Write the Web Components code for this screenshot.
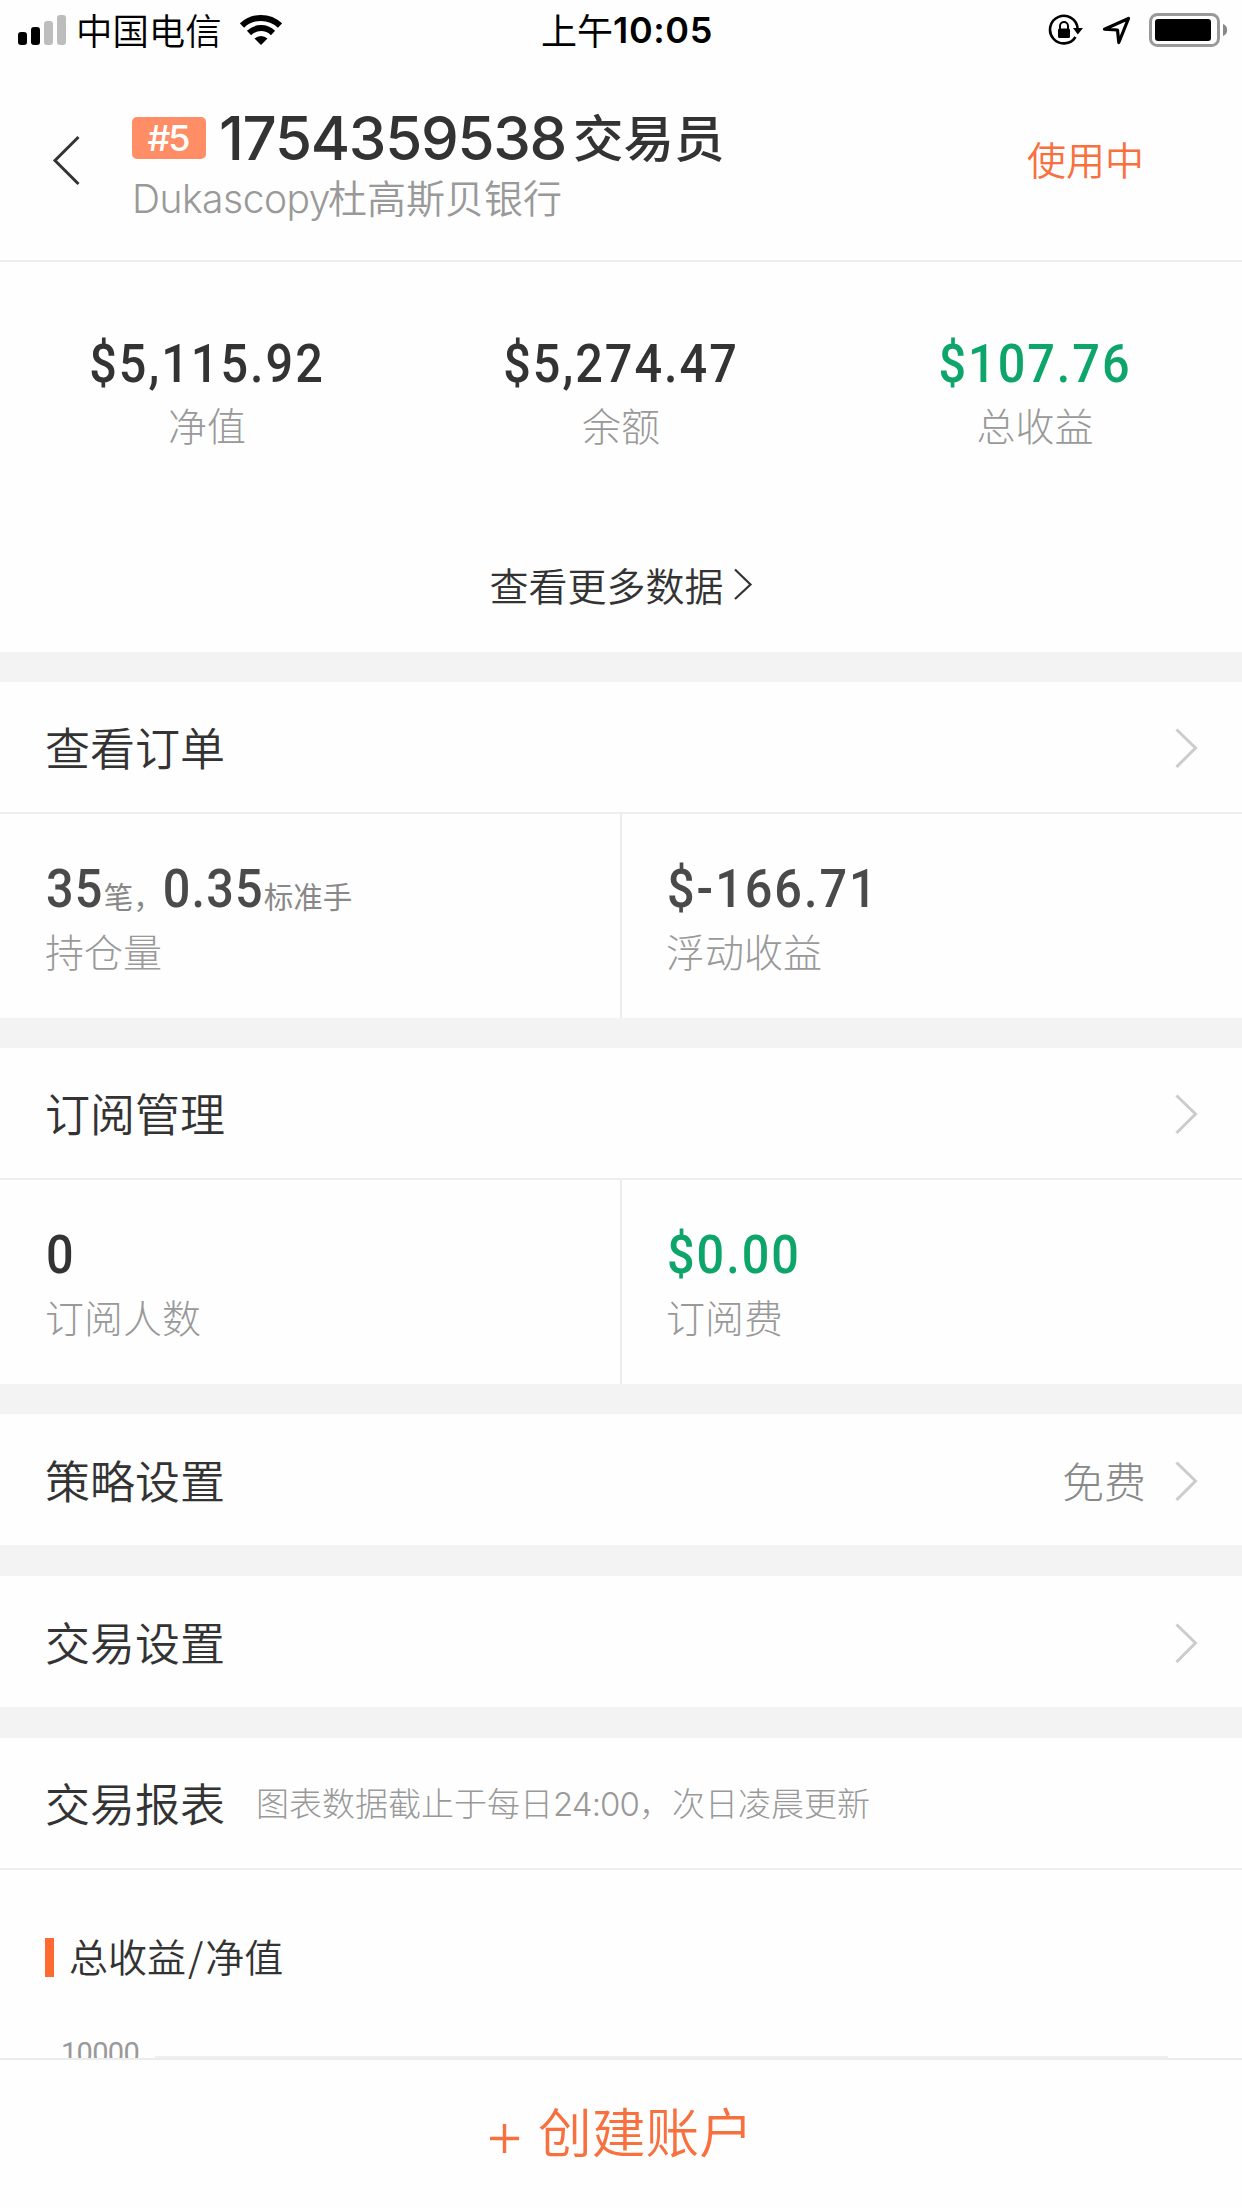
<!DOCTYPE html>
<html lang="zh-CN">
<head>
<meta charset="utf-8">
<title>交易员账户</title>
<style>
  html, body { margin: 0; padding: 0; background: #fefefe; }
  body {
    width: 1242px; height: 2208px; overflow: hidden;
    display: flex; flex-direction: column;
    font-family: "Noto Sans CJK SC", sans-serif; color: #333;
  }
</style>
</head>
<body>
<status-bar carrier="中国电信"><span slot="period">上午</span><span slot="time">10:05</span></status-bar>
<account-header>
  <span slot="rank">#5</span>
  <span slot="id">1754359538</span>
  <span slot="role">交易员</span>
  <span slot="latin">Dukascopy</span>
  <span slot="broker">杜高斯贝银行</span>
  <span slot="state">使用中</span>
</account-header>
<stats-panel>
  <stat-item><span slot="value">$5,115.92</span>净值</stat-item>
  <stat-item><span slot="value">$5,274.47</span>余额</stat-item>
  <stat-item style="--value:#0ea56b"><span slot="value">$107.76</span>总收益</stat-item>
  <span slot="more">查看更多数据</span>
</stats-panel>
<band-gap></band-gap>
<list-row lined arrow>查看订单</list-row>
<metric-pair>
  <metric-cell style="--value:#4a4a4a;--track:1.2px"><span slot="value">35</span><span slot="unit">笔，</span><span slot="value2">0.35</span><span slot="unit2">标准手</span>持仓量</metric-cell>
  <metric-cell style="--value:#4a4a4a"><span slot="value">$-166.71</span>浮动收益</metric-cell>
</metric-pair>
<band-gap></band-gap>
<list-row lined arrow>订阅管理</list-row>
<metric-pair>
  <metric-cell><span slot="value">0</span>订阅人数</metric-cell>
  <metric-cell style="--value:#0ea56b"><span slot="value">$0.00</span>订阅费</metric-cell>
</metric-pair>
<band-gap></band-gap>
<list-row arrow style="height:131px">策略设置<span slot="note">免费</span></list-row>
<band-gap style="height:31px"></band-gap>
<list-row arrow style="height:131px">交易设置</list-row>
<band-gap style="height:31px"></band-gap>
<list-row lined>交易报表<span slot="hint">图表数据截止于每日<span style="font-family:Inter,sans-serif;letter-spacing:-0.9px">24:00</span>，次日凌晨更新</span></list-row>
<chart-panel>总收益<span style="letter-spacing:2px;margin-left:2px">/</span>净值<span slot="tick">10000</span></chart-panel>
<create-action>创建账户</create-action>

<script>
const define = (name, html) => customElements.define(name, class extends HTMLElement {
  constructor() {
    super();
    const t = document.createElement('template');
    t.innerHTML = html;
    this.attachShadow({ mode: 'open' }).appendChild(t.content.cloneNode(true));
    this.ready();
  }
  ready() {
    const c = this.shadowRoot.querySelector('[data-carrier]');
    if (c) c.textContent = this.getAttribute('carrier');
  }
});

define('status-bar', `
<style>
  :host { display: grid; grid-template-columns: 1fr auto 1fr; align-items: center; height: 60px; flex: none; color: #000; font-size: 36px; line-height: 60px; }
  .left { display: flex; align-items: center; padding-left: 18px; }
  .carrier { margin: -2px 0 0 10px; font-size: 36.4px; font-weight: 350; }
  .wifi { margin-left: 18px; }
  .time { display: flex; position: relative; left: 6px; }
  ::slotted([slot=period]) { margin-top: -1px; }
  ::slotted([slot=time]) { font-family: Inter, sans-serif; font-weight: 600; letter-spacing: 0.6px; }
  .right { display: flex; align-items: center; justify-content: flex-end; padding-right: 14px; }
  svg { display: block; flex: none; }
</style>
<div class="left">
  <svg width="48" height="60" viewBox="18 0 48 60">
    <rect x="18" y="32" width="9" height="13" rx="3"/><rect x="31" y="27" width="9" height="18" rx="3"/>
    <rect x="44" y="21" width="9" height="24" rx="3" fill="#bdbdbd"/><rect x="57" y="15" width="9" height="30" rx="3" fill="#bdbdbd"/>
  </svg>
  <span class="carrier" data-carrier></span>
  <svg class="wifi" width="42" height="60" viewBox="240 0 42 60">
    <g fill="none" stroke="#000" stroke-width="6"><path d="M242 25.500A27.500 27.500 0 0 1 280 25.500"/><path d="M249 33A17.200 17.200 0 0 1 273 33"/></g>
    <path d="M254.500 38.500A9.500 9.500 0 0 1 267.500 38.500L261 45Z"/>
  </svg>
</div>
<div class="time"><slot name="period"></slot><slot name="time"></slot></div>
<div class="right">
  <svg width="180" height="60" viewBox="1048 0 180 60">
    <path d="M1077.600 28.500A13.800 13.800 0 1 0 1075.500 37" fill="none" stroke="#000" stroke-width="2.600"/>
    <path d="M1073 28H1083L1077.800 34.500Z"/>
    <rect x="1058" y="28.500" width="12" height="9.500" rx="1.500"/>
    <path d="M1060 29V26A4 4 0 0 1 1068 26V29" fill="none" stroke="#000" stroke-width="2"/>
    <path d="M1104.500 29.200L1128.500 18.500L1118.800 42.500L1117.500 30Z" fill="none" stroke="#000" stroke-width="3.200" stroke-linejoin="round"/>
    <rect x="1150.500" y="14.500" width="68" height="31" rx="7" fill="none" stroke="#999" stroke-width="3"/>
    <rect x="1155" y="19" width="56" height="22" rx="3"/>
    <path d="M1223 24C1228.500 25.500 1228.500 34.500 1223 36Z" fill="#888"/>
  </svg>
</div>`);

define('account-header', `
<style>
  :host { display: flex; align-items: flex-start; box-sizing: border-box; height: 202px; flex: none; border-bottom: 2px solid #ededed; }
  .back { display: block; margin: 75px 0 0 51px; }
  .body { margin: 44px 0 0 51px; flex: 1; }
  .name, .sub { display: flex; }
  .name { height: 68px; align-items: center; }
  .tag { width: 74px; height: 42px; border-radius: 5px; background: #ff8e66; color: #fff; text-align: center; font: 450 36px/42px Inter, sans-serif; letter-spacing: -2px; text-indent: -2px; }
  ::slotted([slot=id]) { margin-left: 13px; font: 500 60px/68px Inter, sans-serif; letter-spacing: -1.3px; width: 347px; white-space: nowrap; }
  ::slotted([slot=role]) { margin-left: 7px; font-size: 50.500px; line-height: 68px; font-weight: 500; position: relative; top: -3px; }
  .sub { color: #999; font-size: 39px; line-height: 48px; }
  ::slotted([slot=latin]) { font-family: Inter, sans-serif; font-weight: 350; width: 196px; letter-spacing: -0.5px; padding-top: 3px; }
  ::slotted([slot=broker]) { font-weight: 350; }
  .state { color: #f9703f; font-size: 39px; line-height: 56px; margin: 70px 98px 0 0; font-weight: 350; }
</style>
<svg class="back" width="30" height="52" viewBox="51 135 30 52"><path d="M78.500 137L55 160.500L78.500 184" fill="none" stroke="#333" stroke-width="3"/></svg>
<div class="body">
  <div class="name"><span class="tag"><slot name="rank"></slot></span><slot name="id"></slot><slot name="role"></slot></div>
  <div class="sub"><slot name="latin"></slot><slot name="broker"></slot></div>
</div>
<span class="state"><slot name="state"></slot></span>`);

define('stats-panel', `
<style>
  :host { display: block; height: 390px; flex: none; }
  .row { display: grid; grid-template-columns: repeat(3, 1fr); padding-top: 72px; }
  .more { display: flex; justify-content: center; align-items: center; gap: 10px; margin-top: 108px; font-size: 39px; line-height: 52px; font-weight: 350; }
  svg { display: block; }
</style>
<div class="row"><slot></slot></div>
<div class="more"><slot name="more"></slot><svg width="19" height="32" viewBox="0 0 19 32"><path d="M1 1.500L16.500 16.500L1 31" fill="none" stroke="#333" stroke-width="2.200"/></svg></div>`);

define('stat-item', `
<style>
  :host { display: flex; flex-direction: column; align-items: center; gap: 4px; }
  .value { font: 500 48.600px/60px Roboto, sans-serif; letter-spacing: 2px; transform: scaleY(1.11); color: var(--value, #333); }
  .label { font-size: 39px; line-height: 52px; font-weight: 300; color: #999; }
</style>
<span class="value"><slot name="value"></slot></span><span class="label"><slot></slot></span>`);

define('band-gap', `<style>:host { display: block; height: 30px; flex: none; background: #f3f3f3; }</style>`);

define('list-row', `
<style>
  :host { display: flex; align-items: center; box-sizing: border-box; height: 130px; flex: none; padding: 0 44px 0 45px; }
  :host([lined]) { height: 132px; border-bottom: 2px solid #eee; }
  .title { font-size: 45px; line-height: 60px; font-weight: 350; }
  ::slotted([slot=hint]) { margin-left: 31px; font-size: 33px; line-height: 44px; font-weight: 300; color: #999; }
  .space { flex: 1; }
  ::slotted([slot=note]) { font-size: 42px; line-height: 56px; font-weight: 300; color: #888; margin-right: 28px; }
  svg { display: none; }
  :host([arrow]) svg { display: block; }
</style>
<span class="title"><slot></slot></span><slot name="hint"></slot><span class="space"></span><slot name="note"></slot>
<svg width="24" height="42" viewBox="0 0 24 42"><path d="M2.500 3.500L21.500 22L2.500 41" fill="none" stroke="#ccc" stroke-width="3"/></svg>`);

define('metric-pair', `
<style>
  :host { display: grid; grid-template-columns: 1fr 1fr; height: 204px; flex: none; background: linear-gradient(#ececec, #ececec) 620px 0 / 2px 100% no-repeat; }
</style><slot></slot>`);

define('metric-cell', `
<style>
  :host { display: flex; flex-direction: column; gap: 5px; padding: 45px 0 0 45px; }
  .value { display: flex; height: 60px; padding-left: 1px; font: 500 48.600px/60px Roboto, sans-serif; letter-spacing: var(--track, 2px); color: var(--value, #333); }
  ::slotted([slot^=value]) { transform: scaleY(1.11); }
  ::slotted([slot^=unit]) { font: 400 29.500px/60px "Noto Sans CJK SC", sans-serif; letter-spacing: 0; color: #888; padding-top: 6px; height: 54px; }
  .label { font-size: 39px; line-height: 52px; font-weight: 300; color: #999; }
</style>
<span class="value"><slot name="value"></slot><slot name="unit"></slot><slot name="value2"></slot><slot name="unit2"></slot></span>
<span class="label"><slot></slot></span>`);

define('chart-panel', `
<style>
  :host { display: block; height: 188px; flex: none; overflow: hidden; }
  .title { display: flex; align-items: center; padding: 61px 0 0 45px; font-size: 39px; line-height: 52px; font-weight: 350; }
  .title i { width: 9px; height: 39px; margin: 3px 15px 0 0; background: #ff6a33; }
  .title span { margin-top: -2px; }
  .axis { display: flex; align-items: center; margin-top: 52px; padding: 0 74px 0 61px; }
  .tick { width: 94px; font: 400 29px/40px Roboto, sans-serif; letter-spacing: -0.7px; color: #999; }
  .grid { flex: 1; height: 3px; margin-top: 8px; background: #f0f0f0; }
</style>
<div class="title"><i></i><span><slot></slot></span></div>
<div class="axis"><span class="tick"><slot name="tick"></slot></span><span class="grid"></span></div>`);

define('create-action', `
<style>
  :host { display: flex; justify-content: center; align-items: center; box-sizing: border-box; height: 150px; flex: none; border-top: 2px solid #ececec; color: #f9703f; font-size: 53.800px; line-height: 72px; font-weight: 350; padding: 0 0 8px 1px; }
  svg { display: block; margin: 16px 19px 0 0; }
</style>
<svg width="29" height="29" viewBox="0 0 29 29"><path d="M0 14.500H29M14.500 0V29" stroke="#f9703f" stroke-width="3.400"/></svg><span><slot></slot></span>`);
</script>
</body>
</html>
